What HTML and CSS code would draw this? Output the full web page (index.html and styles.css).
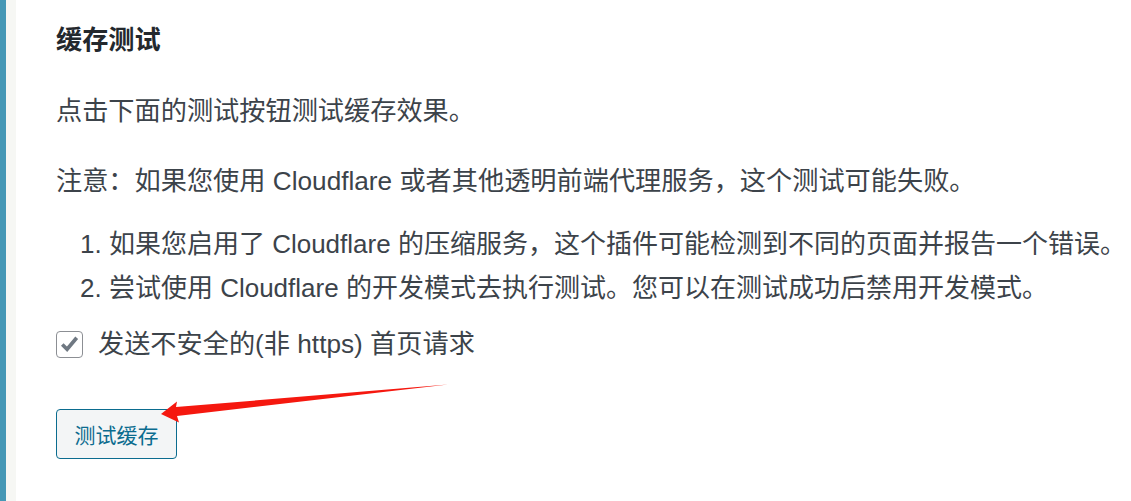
FILE: index.html
```html
<!DOCTYPE html>
<html lang="zh-CN">
<head>
<meta charset="utf-8">
<title>缓存测试</title>
<link rel="stylesheet" href="styles.css">
</head>
<body>
<div class="page">
  <div class="bar"></div>
  <div class="gutter"></div>
  <main class="content">
    <h2 class="title">缓存测试</h2>
    <p class="p1">点击下面的测试按钮测试缓存效果。</p>
    <p class="p2">注意：如果您使用 Cloudflare 或者其他透明前端代理服务，这个测试可能失败。</p>
    <ol class="notes">
      <li>如果您启用了 Cloudflare 的压缩服务，这个插件可能检测到不同的页面并报告一个错误。</li>
      <li>尝试使用 Cloudflare 的开发模式去执行测试。您可以在测试成功后禁用开发模式。</li>
    </ol>
    <label class="check">
      <span class="box"><svg width="26" height="26" viewBox="0 0 26 26"><path d="M5.5 13.5 L10.5 18.5 L20.5 6.5" fill="none" stroke="#6f7882" stroke-width="3.8" stroke-linejoin="miter" stroke-linecap="butt"/></svg></span>
      <span class="label">发送不安全的(非 https) 首页请求</span>
    </label>
    <div class="actions">
      <button class="btn" type="button">测试缓存</button>
    </div>
  </main>
</div>
<svg class="arrow" width="1131" height="501" viewBox="0 0 1131 501">
  <polygon points="161,414 177,401.5 176,407 448,384.5 177,416 179,422.5" fill="#f5180f"/>
</svg>
</body>
</html>
```
FILE: styles.css
```css
html, body {
  margin: 0;
  padding: 0;
  background: #fff;
}
body {
  position: relative;
  width: 1131px;
  height: 501px;
  overflow: hidden;
  font-family: "Liberation Sans", "Noto Sans CJK SC", sans-serif;
  color: #3c434a;
}
.page {
  display: flex;
  height: 501px;
}
.bar {
  width: 6px;
  background: #4598b6;
  flex: none;
}
.gutter {
  width: 10px;
  background: #f6f7f4;
  flex: none;
}
.content {
  flex: 1;
  padding: 22px 0 0 40px;
  font-size: 26px;
  white-space: nowrap;
}
.title {
  margin: 0;
  font-size: 26.2px;
  line-height: 36px;
  font-weight: 700;
  color: #23282d;
}
.p1, .p2 {
  margin: 0;
  line-height: 44px;
  font-size: 26.2px;
}
.p1 { margin-top: 31px; }
.p2 { margin-top: 26px; }
.notes {
  margin: 20px 0 0 0;
  padding: 0 0 0 24px;
  list-style: decimal inside;
  line-height: 43.5px;
}
.check {
  display: flex;
  align-items: center;
  gap: 15px;
  margin-top: 12px;
  height: 44px;
  font-size: 26.2px;
}
.box {
  width: 25px;
  height: 25px;
  border: 1px solid #8c8f94;
  border-radius: 4px;
  background: #fff;
  display: flex;
  align-items: center;
  justify-content: center;
  flex: none;
}
.box svg {
  display: block;
}
.label {
  line-height: 44px;
}
.actions {
  margin-top: 43px;
}
.btn {
  font-family: "Noto Sans CJK SC", sans-serif;
  font-size: 21px;
  color: #0b6c8f;
  background: #f3f5f6;
  border: 1px solid #0b6c8f;
  border-radius: 4px;
  width: 121px;
  height: 50px;
  padding: 0;
  margin: 0;
  line-height: 48px;
}
.arrow {
  position: absolute;
  left: 0;
  top: 0;
  pointer-events: none;
}
```
